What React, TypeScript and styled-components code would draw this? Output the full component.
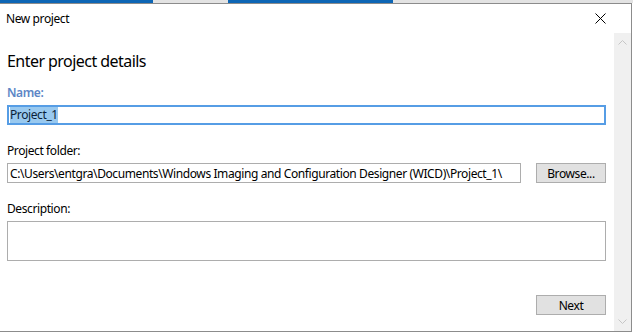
import React from "react";
import styled, { createGlobalStyle } from "styled-components";

const Global = createGlobalStyle`
  html, body { margin: 0; padding: 0; background: #ffffff; }
  body { font-family: "Noto Sans", "Open Sans", sans-serif; font-size: 12px; color: #000; letter-spacing: -0.4px; }
  #root { width: 633px; height: 332px; overflow: hidden; }
`;

const Page = styled.div`
  width: 633px;
  height: 332px;
  display: flex;
  flex-direction: column;
  background: #fff;
`;

const Strip = styled.div`
  display: flex;
  height: 3px;
  flex: none;
`;

const StripSeg = styled.div<{ $w: number; $blue?: boolean }>`
  width: ${(p) => p.$w}px;
  flex: ${(p) => (p.$w ? "none" : "1")};
  background: ${(p) => (p.$blue ? "#0d66b5" : "#e3e3e3")};
`;

const Dialog = styled.div`
  width: 631px;
  height: 327px;
  border-top: 1px solid #8c8c8c;
  border-right: 1px solid #8c8c8c;
  border-bottom: 1px solid #8c8c8c;
  display: flex;
  flex-direction: column;
  background: #fff;
`;

const TitleBar = styled.div`
  height: 29px;
  flex: none;
  display: flex;
  align-items: center;
  justify-content: space-between;
  padding: 0 0 0 6px;
`;

const Title = styled.span`
  font-size: 12px;
  color: #000;
`;

const CloseBtn = styled.div`
  width: 46px;
  height: 29px;
  display: flex;
  align-items: center;
  justify-content: center;
  margin-right: 8px;
`;

const Body = styled.div`
  flex: 1;
  display: flex;
  min-height: 0;
`;

const Content = styled.div`
  flex: 1;
  min-width: 0;
  padding: 17px 8px 0 7px;
  display: flex;
  flex-direction: column;
`;

const Heading = styled.div`
  font-size: 16px;
  line-height: 22px;
  letter-spacing: -0.55px;
  color: #000;
  margin-bottom: 13px;
`;

const Label = styled.div<{ $active?: boolean }>`
  font-size: 12px;
  line-height: 16px;
  color: ${(p) => (p.$active ? "#5d86c6" : "#000")};
  font-weight: ${(p) => (p.$active ? 600 : 400)};
  margin-bottom: 4px;
`;

const Field = styled.div<{ $focused?: boolean; $h?: number }>`
  height: ${(p) => p.$h ?? 20}px;
  box-sizing: border-box;
  border: ${(p) => (p.$focused ? "2px solid #569de5" : "1px solid #adadad")};
  display: flex;
  align-items: ${(p) => (p.$h ? "flex-start" : "center")};
  padding: 0 ${(p) => (p.$focused ? 1 : 2)}px;
  font-size: 12px;
  flex: 1;
  min-width: 0;
  white-space: nowrap;
  overflow: hidden;
`;

const Selected = styled.span`
  background: #99c9ef;
  color: #0a1f3a;
  line-height: 16px;
`;

const Row = styled.div`
  display: flex;
  gap: 15px;
  align-items: stretch;
`;

const Button = styled.div`
  width: 70px;
  height: 20px;
  box-sizing: border-box;
  background: #e1e1e1;
  border: 1px solid #adadad;
  display: flex;
  align-items: center;
  justify-content: center;
  font-size: 12px;
  flex: none;
`;

const Group = styled.div<{ $gap: number }>`
  margin-bottom: ${(p) => p.$gap}px;
  display: flex;
  flex-direction: column;
`;

const Footer = styled.div`
  display: flex;
  justify-content: flex-end;
  margin-top: auto;
  margin-bottom: 16px;
`;

const Scrollbar = styled.div`
  width: 17px;
  flex: none;
  background: #f0f0f0;
  display: flex;
  flex-direction: column;
  justify-content: space-between;
  align-items: center;
  padding: 7px 0;
`;

const Arrow = ({ down }: { down?: boolean }) => (
  <svg width="9" height="5" viewBox="0 0 9 5">
    <path
      d={down ? "M0.5 0.5 L4.5 4.5 L8.5 0.5" : "M0.5 4.5 L4.5 0.5 L8.5 4.5"}
      fill="none"
      stroke="#c6c6c6"
      strokeWidth="1"
    />
  </svg>
);

export default function App() {
  return (
    <Page>
      <Global />
      <Strip>
        <StripSeg $w={153} $blue />
        <StripSeg $w={75} />
        <StripSeg $w={165} $blue />
        <StripSeg $w={0} />
      </Strip>
      <Dialog>
        <TitleBar>
          <Title>New project</Title>
          <CloseBtn>
            <svg width="11" height="11" viewBox="0 0 11 11">
              <path d="M0.5 0.5 L10.5 10.5 M10.5 0.5 L0.5 10.5" stroke="#000" strokeWidth="1" />
            </svg>
          </CloseBtn>
        </TitleBar>
        <Body>
          <Content>
            <Heading>Enter project details</Heading>
            <Group $gap={18}>
              <Label $active>Name:</Label>
              <Row>
                <Field $focused>
                  <Selected>Project_1</Selected>
                </Field>
              </Row>
            </Group>
            <Group $gap={18}>
              <Label>Project folder:</Label>
              <Row>
                <Field>C:\Users\entgra\Documents\Windows Imaging and Configuration Designer (WICD)\Project_1\</Field>
                <Button>Browse...</Button>
              </Row>
            </Group>
            <Group $gap={0}>
              <Label>Description:</Label>
              <Row>
                <Field $h={40} />
              </Row>
            </Group>
            <Footer>
              <Button>Next</Button>
            </Footer>
          </Content>
          <Scrollbar>
            <Arrow />
            <Arrow down />
          </Scrollbar>
        </Body>
      </Dialog>
    </Page>
  );
}
